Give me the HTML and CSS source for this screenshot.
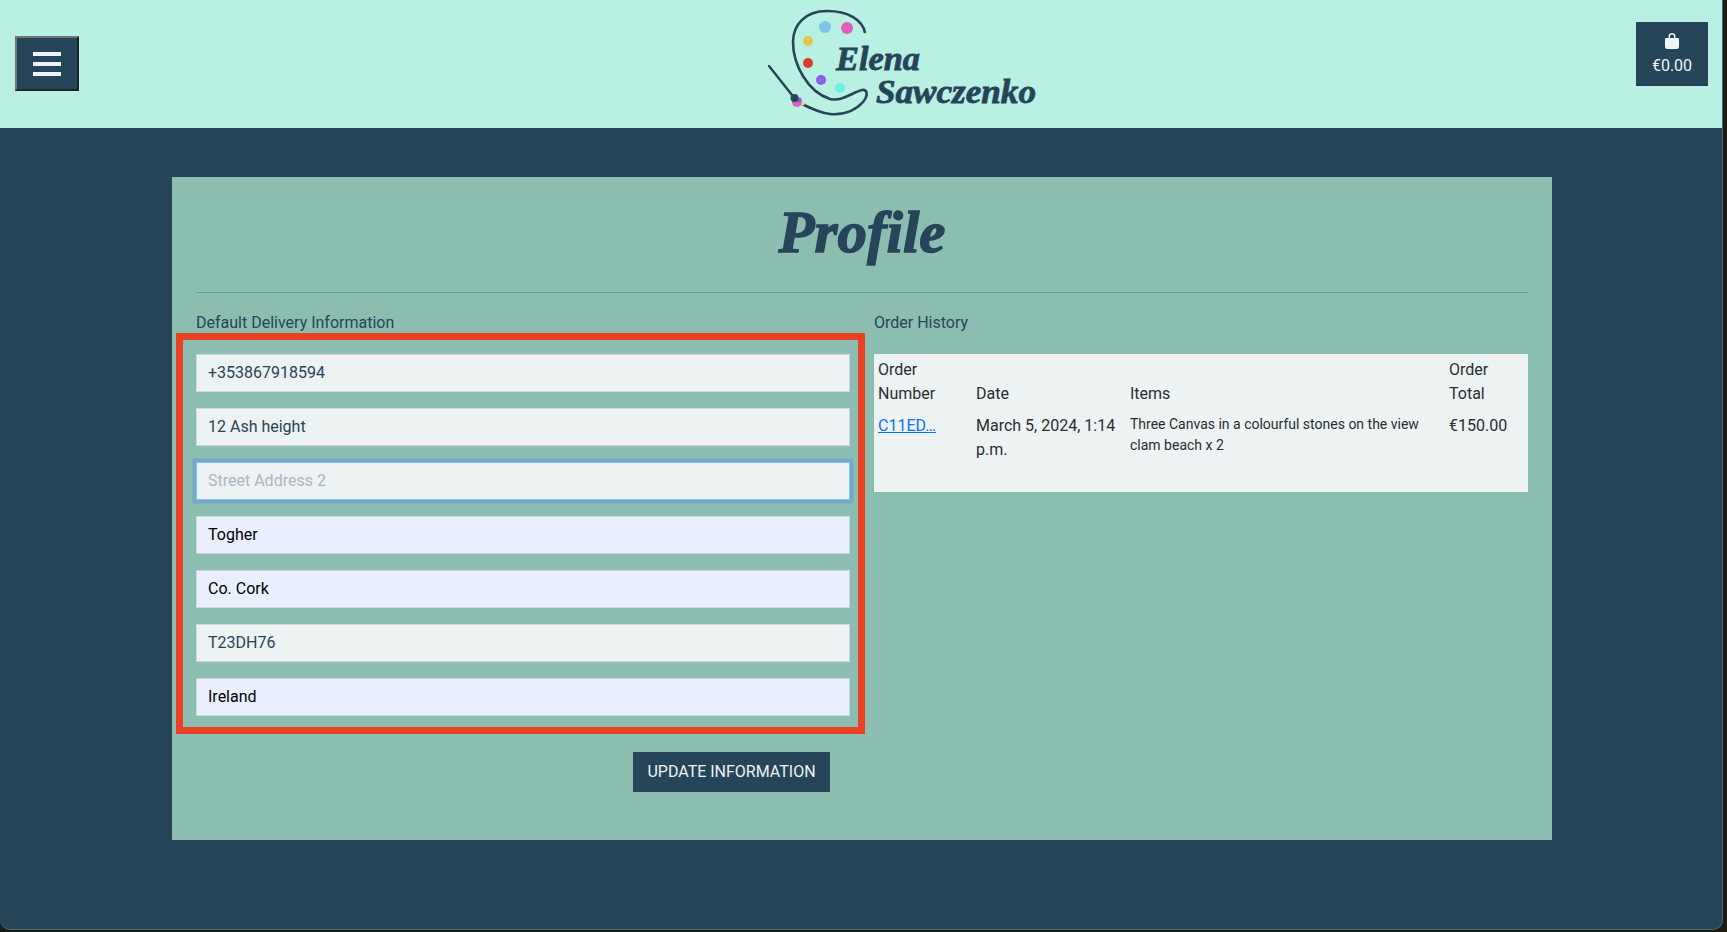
FILE: index.html
```html
<!DOCTYPE html>
<html lang="en">
<head>
    <meta charset="utf-8" />
    <title>Profile</title>
    <link rel="stylesheet" href="styles.css">
</head>
<body>
<div class="page">
    <header class="topbar">
        <button class="menu-btn" type="button" aria-label="Menu">
            <svg width="28" height="24" viewBox="0 0 28 24"><path d="M0 2h28M0 12h28M0 22h28" stroke="#eef3f3" stroke-width="4" fill="none"/></svg>
        </button>
        <a class="logo" href="#">
            <svg width="310" height="128" viewBox="0 0 310 128">
                <path d="M115 33C113 20 98 11 77 11C55 11 43 25 43 42C43 65 58 92 80 99C92 102 103 92 112 90C118 89 118 96 113 102C104 112 92 115 80 114C70 113 60 108 52 104" fill="none" stroke="#264559" stroke-width="2.6"/>
                <circle cx="75" cy="27" r="6" fill="#7cc4e8"/>
                <circle cx="97" cy="28" r="6" fill="#e05fb8"/>
                <circle cx="58" cy="41" r="5" fill="#e8c44f"/>
                <circle cx="58" cy="63" r="5" fill="#d63f2a"/>
                <circle cx="71" cy="80" r="5" fill="#8b5fe8"/>
                <circle cx="90" cy="88" r="5" fill="#6ff0e0"/>
                <path d="M19 66L42 95" stroke="#264559" stroke-width="2.4" stroke-linecap="round"/>
                <circle cx="47" cy="102" r="5" fill="#e05fb8"/>
                <circle cx="49" cy="100" r="2.5" fill="#8b5fe8"/>
                <circle cx="44.500" cy="98" r="4" fill="#264559"/>
                <circle cx="53" cy="104" r="1.500" fill="#e8e04f"/>
                <text class="logo-text" x="86" y="70" textLength="84" lengthAdjust="spacingAndGlyphs">Elena</text>
                <text class="logo-text" x="126" y="103" textLength="160" lengthAdjust="spacingAndGlyphs">Sawczenko</text>
            </svg>
        </a>
        <a class="cart" href="#">
            <svg width="14" height="16" viewBox="0 0 14 16"><path d="M3.500 5V3.500a3.500 3.500 0 0 1 7 0V5H13a1 1 0 0 1 1 1v7.500a2.500 2.500 0 0 1-2.500 2.500h-9A2.500 2.500 0 0 1 0 13.500V6a1 1 0 0 1 1-1zM5 5h4V3.500a2 2 0 0 0-4 0z" fill="#eef3f3" fill-rule="evenodd"/></svg>
            <span>€0.00</span>
        </a>
    </header>

    <main class="content">
        <section class="card">
            <h1 class="title">Profile</h1>
            <hr class="divider">
            <div class="columns">
                <div class="col-left">
                    <p class="col-label">Default Delivery Information</p>
                    <form class="delivery-form">
                        <input class="field" type="text" value="+353867918594">
                        <input class="field" type="text" value="12 Ash height">
                        <input class="field focused" type="text" placeholder="Street Address 2">
                        <input class="field filled" type="text" value="Togher">
                        <input class="field filled" type="text" value="Co. Cork">
                        <input class="field" type="text" value="T23DH76">
                        <input class="field filled" type="text" value="Ireland">
                    </form>
                    <div class="form-actions">
                        <button class="update-btn" type="button">UPDATE INFORMATION</button>
                    </div>
                </div>
                <div class="col-right">
                    <p class="col-label">Order History</p>
                    <table class="orders">
                        <colgroup>
                            <col class="c-number">
                            <col class="c-date">
                            <col class="c-items">
                            <col class="c-total">
                        </colgroup>
                        <thead>
                            <tr>
                                <th>Order Number</th>
                                <th>Date</th>
                                <th>Items</th>
                                <th>Order Total</th>
                            </tr>
                        </thead>
                        <tbody>
                            <tr>
                                <td><a href="#">C11ED…</a></td>
                                <td>March 5, 2024, 1:14 p.m.</td>
                                <td class="items">Three Canvas in a colourful stones on the view clam beach x 2</td>
                                <td>€150.00</td>
                            </tr>
                        </tbody>
                    </table>
                </div>
            </div>
        </section>
    </main>
</div>
</body>
</html>
```

FILE: styles.css
```css
html, body {
  margin: 0;
  height: 100%;
  overflow: hidden;
  background-color: #1b1b10;
}

.page {
  box-sizing: border-box;
  width: 1723px;
  height: 930px;
  background-color: #264559;
  border-right: 1px solid #46667b;
  border-bottom: 1px solid #46667b;
  border-radius: 0 0 10px 10px;
  overflow: hidden;
  font-family: Roboto, "Liberation Sans", sans-serif;
  font-size: 16px;
  line-height: 24px;
  color: #264559;
}

.topbar {
  display: flex;
  align-items: flex-start;
  height: 128px;
  padding: 0 14px 0 15px;
  background-color: #b8f0e3;
}

.menu-btn {
  display: flex;
  align-items: center;
  justify-content: center;
  box-sizing: border-box;
  width: 64px;
  height: 55px;
  margin-top: 36px;
  padding: 0;
  background-color: #264559;
  border-width: 2px;
  border-style: solid;
  border-color: #6f7474 #222 #222 #6f7474;
}

.logo {
  display: block;
  margin-left: 671px;
  height: 128px;
}

.logo svg {
  display: block;
}

.logo-text {
  font-family: "Liberation Serif", serif;
  font-style: italic;
  font-weight: bold;
  font-size: 34px;
  fill: #264559;
  stroke: #264559;
  stroke-width: 0.8px;
}

.cart {
  display: flex;
  flex-direction: column;
  align-items: center;
  box-sizing: border-box;
  width: 72px;
  height: 64px;
  margin-top: 22px;
  margin-left: auto;
  padding-top: 11px;
  background-color: #264559;
  color: #eef3f3;
  text-decoration: none;
}

.cart span {
  margin-top: 5px;
}

.content {
  padding: 49px 0 0 172px;
}

.card {
  box-sizing: border-box;
  width: 1380px;
  height: 663px;
  padding: 15px 24px 0;
  background-color: #8cbdb1;
}

.title {
  margin: 0;
  font-family: "Liberation Serif", serif;
  font-style: italic;
  font-weight: bold;
  font-size: 59px;
  line-height: 80px;
  text-align: center;
  color: #264559;
  -webkit-text-stroke: 1.4px #264559;
}

.divider {
  height: 1px;
  margin: 20px 0 18px;
  border: 0;
  background-color: #6f9d95;
}

.columns {
  display: grid;
  grid-template-columns: 678px 654px;
}

.col-left, .col-right {
  min-width: 0;
}

.col-label {
  margin: 0;
}

.delivery-form {
  display: flex;
  flex-direction: column;
  gap: 16px;
  box-sizing: border-box;
  width: 689px;
  height: 401px;
  margin: -2px 0 0 -20px;
  padding: 14px 8px 0 13px;
  border: 7px solid #ea4125;
}

.field {
  box-sizing: border-box;
  width: 654px;
  height: 38px;
  padding: 0 12px 2px 11px;
  font-family: inherit;
  font-size: 16px;
  color: #264559;
  background-color: #edf2f2;
  border: 1px solid #ced4da;
  border-radius: 0;
  outline: none;
}

.field.filled {
  background-color: #e9effe;
  color: #000;
}

.field.focused {
  border-color: #80bdff;
  box-shadow: 0 0 0 3.500px #76a9c8;
}

.field::placeholder {
  color: #adb5c4;
  opacity: 1;
}

.form-actions {
  display: flex;
  justify-content: flex-end;
  margin-top: 18px;
  margin-right: 44px;
}

.update-btn {
  box-sizing: border-box;
  width: 197px;
  height: 40px;
  padding: 0 0 2px;
  font-family: inherit;
  font-size: 16px;
  color: #eef3f3;
  background-color: #264559;
  border: none;
}

.orders {
  box-sizing: border-box;
  width: 654px;
  margin-top: 19px;
  border-collapse: collapse;
  table-layout: fixed;
  background-color: #edf2f2;
  color: #2a2e32;
}

.c-number { width: 99px; }
.c-date { width: 153px; }
.c-items { width: 320px; }
.c-total { width: 82px; }

.orders th {
  padding: 4px 3px 2px 4px;
  font-weight: normal;
  text-align: left;
  vertical-align: bottom;
}

.orders td {
  padding: 6px 3px 30px 4px;
  vertical-align: top;
}

.orders th:nth-child(2), .orders td:nth-child(2),
.orders th:nth-child(4), .orders td:nth-child(4) {
  padding-left: 3px;
}

.orders td.items {
  font-size: 14px;
  line-height: 21px;
}

.orders a {
  color: #0d6efd;
}
```
